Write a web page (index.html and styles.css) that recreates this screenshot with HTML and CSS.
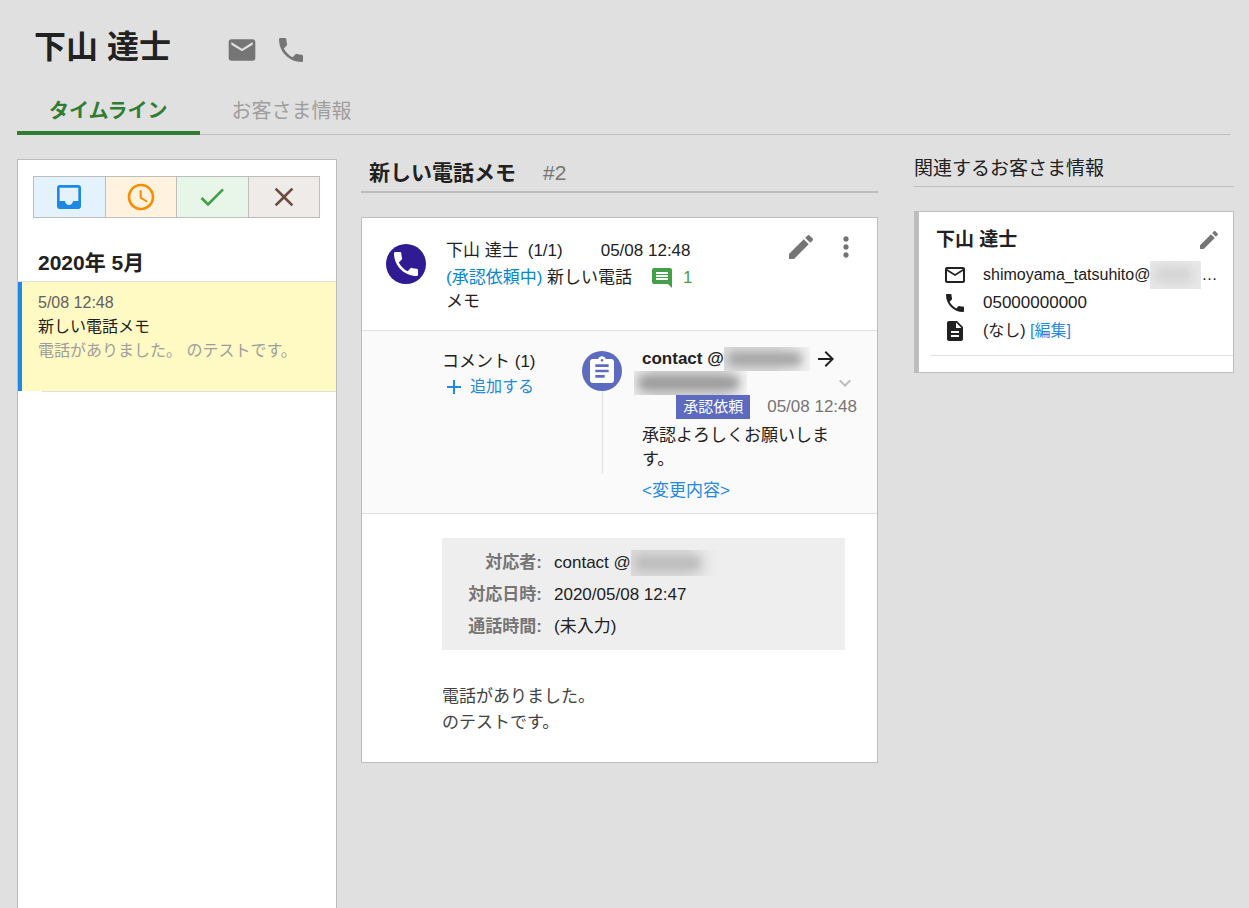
FILE: index.html
```html
<!DOCTYPE html>
<html lang="ja">
<head>
<meta charset="utf-8">
<meta name="viewport" content="width=device-width, initial-scale=1">
<title>下山 達士</title>
<link rel="stylesheet" href="styles.css">
</head>
<body>
<svg class="sprite" aria-hidden="true">
  <symbol id="i-mail" viewBox="0 0 24 24"><path d="M20 4H4c-1.1 0-1.99.9-1.99 2L2 18c0 1.1.9 2 2 2h16c1.1 0 2-.9 2-2V6c0-1.1-.9-2-2-2zm0 4l-8 5-8-5V6l8 5 8-5v2z"/></symbol>
  <symbol id="i-mail-outline" viewBox="0 0 24 24"><path d="M20 4H4c-1.1 0-1.99.9-1.99 2L2 18c0 1.1.9 2 2 2h16c1.1 0 2-.9 2-2V6c0-1.1-.9-2-2-2zm0 14H4V8l8 5 8-5v10zm-8-7L4 6h16l-8 5z"/></symbol>
  <symbol id="i-phone" viewBox="0 0 24 24"><path d="M6.62 10.79c1.44 2.83 3.76 5.14 6.59 6.59l2.2-2.2c.27-.27.67-.36 1.02-.24 1.12.37 2.33.57 3.57.57.55 0 1 .45 1 1V20c0 .55-.45 1-1 1-9.39 0-17-7.61-17-17 0-.55.45-1 1-1h3.5c.55 0 1 .45 1 1 0 1.25.2 2.45.57 3.57.11.35.03.74-.25 1.02l-2.2 2.2z"/></symbol>
  <symbol id="i-inbox" viewBox="0 0 24 24"><path d="M19 3H4.99c-1.11 0-1.98.89-1.98 2L3 19c0 1.1.88 2 1.99 2H19c1.1 0 2-.9 2-2V5c0-1.11-.9-2-2-2zm0 12h-4c0 1.66-1.35 3-3 3s-3-1.34-3-3H4.99V5H19v10z"/></symbol>
  <symbol id="i-clock" viewBox="0 0 24 24"><path d="M11.99 2C6.47 2 2 6.48 2 12s4.47 10 9.99 10C17.52 22 22 17.52 22 12S17.52 2 11.99 2zM12 20c-4.42 0-8-3.58-8-8s3.58-8 8-8 8 3.58 8 8-3.58 8-8 8zm.5-13H11v6l5.25 3.15.75-1.23-4.5-2.67z"/></symbol>
  <symbol id="i-check" viewBox="0 0 24 24"><path d="M9 16.17L4.83 12l-1.42 1.41L9 19 21 7l-1.41-1.41z"/></symbol>
  <symbol id="i-close" viewBox="0 0 24 24"><path d="M19 6.41L17.59 5 12 10.59 6.41 5 5 6.41 10.59 12 5 17.59 6.41 19 12 13.41 17.59 19 19 17.59 13.41 12z"/></symbol>
  <symbol id="i-comment" viewBox="0 0 24 24"><path d="M21.99 4c0-1.1-.89-2-1.99-2H4c-1.1 0-2 .9-2 2v12c0 1.1.9 2 2 2h14l4 4-.01-18zM18 14H6v-2h12v2zm0-3H6V9h12v2zm0-3H6V6h12v2z"/></symbol>
  <symbol id="i-edit" viewBox="0 0 24 24"><path d="M3 17.25V21h3.75L17.81 9.94l-3.75-3.75L3 17.25zM20.71 7.04c.39-.39.39-1.02 0-1.41l-2.34-2.34c-.39-.39-1.02-.39-1.41 0l-1.83 1.83 3.75 3.75 1.83-1.83z"/></symbol>
  <symbol id="i-more" viewBox="0 0 24 24"><path d="M12 8c1.1 0 2-.9 2-2s-.9-2-2-2-2 .9-2 2 .9 2 2 2zm0 2c-1.1 0-2 .9-2 2s.9 2 2 2 2-.9 2-2-.9-2-2-2zm0 6c-1.1 0-2 .9-2 2s.9 2 2 2 2-.9 2-2-.9-2-2-2z"/></symbol>
  <symbol id="i-task" viewBox="0 0 24 24"><path d="M19 3h-4.18C14.4 1.84 13.3 1 12 1c-1.3 0-2.4.84-2.82 2H5c-1.1 0-2 .9-2 2v14c0 1.1.9 2 2 2h14c1.1 0 2-.9 2-2V5c0-1.1-.9-2-2-2zm-7 0c.55 0 1 .45 1 1s-.45 1-1 1-1-.45-1-1 .45-1 1-1zm2 14H7v-2h7v2zm3-4H7v-2h10v2zm0-4H7V7h10v2z"/></symbol>
  <symbol id="i-arrow" viewBox="0 0 24 24"><path d="M12 4l-1.41 1.41L16.17 11H4v2h12.17l-5.58 5.59L12 20l8-8z"/></symbol>
  <symbol id="i-down" viewBox="0 0 24 24"><path d="M16.59 8.59L12 13.17 7.41 8.59 6 10l6 6 6-6z"/></symbol>
  <symbol id="i-add" viewBox="0 0 24 24"><path d="M19 13h-6v6h-2v-6H5v-2h6V5h2v6h6v2z"/></symbol>
  <symbol id="i-doc" viewBox="0 0 24 24"><path d="M14 2H6c-1.1 0-1.99.9-1.99 2L4 20c0 1.1.89 2 1.99 2H18c1.1 0 2-.9 2-2V8l-6-6zm2 16H8v-2h8v2zm0-4H8v-2h8v2zm-3-5V3.5L18.5 9H13z"/></symbol>
</svg>

<header class="header">
  <div class="customer">
    <h1 class="customer-name">下山 達士</h1>
    <div class="customer-actions">
      <button class="icon-button" aria-label="メール"><svg class="icon icon-l"><use href="#i-mail"/></svg></button>
      <button class="icon-button" aria-label="電話"><svg class="icon icon-l"><use href="#i-phone"/></svg></button>
    </div>
  </div>
  <nav class="tabs">
    <button class="tab tab-active">タイムライン</button>
    <button class="tab">お客さま情報</button>
  </nav>
</header>

<main class="columns">
  <section class="timeline">
    <div class="filters">
      <button class="filter filter-inbox" aria-label="受信箱"><svg class="icon icon-l"><use href="#i-inbox"/></svg></button>
      <button class="filter filter-pending" aria-label="保留"><svg class="icon icon-l"><use href="#i-clock"/></svg></button>
      <button class="filter filter-done" aria-label="完了"><svg class="icon icon-l"><use href="#i-check"/></svg></button>
      <button class="filter filter-none" aria-label="対応不要"><svg class="icon icon-l"><use href="#i-close"/></svg></button>
    </div>
    <h2 class="month">2020年 5月</h2>
    <article class="entry">
      <div class="entry-date">5/08 12:48</div>
      <div class="entry-title">新しい電話メモ</div>
      <div class="entry-text">電話がありました。 のテストです。</div>
    </article>
    <hr class="entry-rule">
  </section>

  <section class="memo">
    <header class="memo-heading">
      <h2 class="memo-title">新しい電話メモ</h2>
      <span class="memo-number">#2</span>
    </header>
    <article class="card">
      <div class="card-head">
        <span class="avatar avatar-phone"><svg class="icon icon-l"><use href="#i-phone"/></svg></span>
        <div class="summary">
          <div class="summary-row">
            <span>下山 達士</span><span>(1/1)</span><time class="summary-time">05/08 12:48</time>
          </div>
          <div class="subject-row">
            <div class="subject"><span class="status">(承認依頼中)</span> 新しい電話メモ</div>
            <span class="comment-count"><svg class="icon icon-m"><use href="#i-comment"/></svg>1</span>
          </div>
        </div>
        <div class="card-tools">
          <button class="icon-button" aria-label="編集"><svg class="icon icon-l"><use href="#i-edit"/></svg></button>
          <button class="icon-button" aria-label="メニュー"><svg class="icon icon-l"><use href="#i-more"/></svg></button>
        </div>
      </div>

      <div class="comments">
        <div class="comments-side">
          <div class="comments-label">コメント (1)</div>
          <button class="add-button"><svg class="icon icon-m"><use href="#i-add"/></svg>追加する</button>
        </div>
        <div class="thread">
          <span class="avatar avatar-task"><svg class="icon icon-l"><use href="#i-task"/></svg></span>
          <span class="thread-line"></span>
        </div>
        <div class="comment">
          <div class="comment-from">contact @<span class="mask mask-from"><i></i></span><svg class="icon icon-m"><use href="#i-arrow"/></svg></div>
          <div class="comment-to">
            <span class="mask mask-to"><i></i></span>
            <button class="icon-button toggle" aria-label="開く"><svg class="icon icon-m"><use href="#i-down"/></svg></button>
          </div>
          <div class="comment-meta"><span class="badge">承認依頼</span><time>05/08 12:48</time></div>
          <p class="comment-text">承認よろしくお願いします。</p>
          <a class="link" href="#">&lt;変更内容&gt;</a>
        </div>
      </div>

      <div class="card-body">
        <dl class="details">
          <dt>対応者:</dt><dd class="masked">contact @<span class="mask mask-staff"><i></i></span></dd>
          <dt>対応日時:</dt><dd>2020/05/08 12:47</dd>
          <dt>通話時間:</dt><dd>(未入力)</dd>
        </dl>
        <p class="body-text">電話がありました。<br>のテストです。</p>
      </div>
    </article>
  </section>

  <aside class="related">
    <h2 class="related-title">関連するお客さま情報</h2>
    <article class="profile">
      <div class="profile-head">
        <h3 class="profile-name">下山 達士</h3>
        <button class="icon-button" aria-label="編集"><svg class="icon icon-m"><use href="#i-edit"/></svg></button>
      </div>
      <ul class="contacts">
        <li><svg class="icon icon-m"><use href="#i-mail-outline"/></svg><span class="masked">shimoyama_tatsuhito@<span class="mask mask-mail"><i></i></span>…</span></li>
        <li class="number"><svg class="icon icon-m"><use href="#i-phone"/></svg><span>05000000000</span></li>
        <li><svg class="icon icon-m"><use href="#i-doc"/></svg><span>(なし) <a class="link" href="#">[編集]</a></span></li>
      </ul>
    </article>
  </aside>
</main>
</body>
</html>
```

FILE: styles.css
```css
* { box-sizing: border-box; }

body {
  margin: 0;
  min-height: 100vh;
  display: flex;
  flex-direction: column;
  padding: 0 15px 0 17px;
  background: #e0e0e0;
  color: #212121;
  font: 17px/24px "Liberation Sans", "Noto Sans CJK JP", sans-serif;
}

h1, h2, h3, p, dl, dd, ul { margin: 0; padding: 0; }
button {
  margin: 0;
  padding: 0;
  border: 0;
  background: none;
  color: inherit;
  font: inherit;
  cursor: pointer;
}
a { text-decoration: none; }

.sprite { display: none; }
.icon { display: block; flex: none; fill: currentColor; }
.icon-l { width: 32px; height: 32px; }
.icon-m { width: 24px; height: 24px; }
.icon-button { color: #757575; }
.link { color: #1e88e5; }

/* Header */
.customer {
  display: flex;
  align-items: center;
  gap: 55px;
  padding: 24px 17px 0;
}
.customer-name { font-size: 32px; line-height: 46px; }
.customer-actions { display: flex; gap: 17px; padding-top: 6px; }
.tabs {
  display: flex;
  margin: 16px 4px 0 0;
  height: 49px;
  box-shadow: inset 0 -1px #bdbdbd;
}
.tab {
  padding: 5px 32px 0;
  color: #9e9e9e;
  font-size: 20px;
  border-bottom: 4px solid transparent;
}
.tab-active { color: #2e7d32; font-weight: bold; border-color: #2e7d32; }

/* Columns */
.columns {
  flex: 1;
  display: grid;
  grid-template-columns: 320px minmax(0, 1fr) 320px;
  padding-top: 24px;
}

/* Timeline */
.timeline {
  background: #fff;
  border: 1px solid #bdbdbd;
  border-bottom: 0;
}
.filters {
  display: grid;
  grid-template-columns: repeat(4, 1fr);
  gap: 1px;
  margin: 16px 16px 0 15px;
  border: 1px solid #bdbdbd;
  background: #bdbdbd;
}
.filter { display: flex; justify-content: center; padding: 4px 0; }
.filter-inbox { background: #e3f2fd; color: #1e88e5; }
.filter-pending { background: #fff3e0; color: #fb8c00; }
.filter-done { background: #e8f5e9; color: #43a047; }
.filter-none { background: #efebe9; color: #6d4c41; }
.month {
  padding: 29px 20px 3px;
  font-size: 21px;
  line-height: 31px;
  border-bottom: 1px solid #e0e0e0;
}
.entry {
  min-height: 109px;
  padding: 9px 16px;
  border-left: 4px solid #1e88e5;
  background: #fff9c4;
  font-size: 16px;
}
.entry-date { color: #616161; }
.entry-text { color: #9e9e9e; }
.entry-rule { margin: 0 0 0 24px; border: 0; border-top: 1px solid #e0e0e0; }

/* Memo */
.memo { padding: 0 36px 0 24px; }
.memo-heading {
  display: flex;
  gap: 27px;
  padding: 0 8px 4px;
  border-bottom: 2px solid #bdbdbd;
  font-size: 21px;
  line-height: 28px;
}
.memo-title { font-size: inherit; }
.memo-number { color: #757575; }
.card {
  margin-top: 24px;
  border: 1px solid #bdbdbd;
  background: #fff;
}
.card-head {
  display: flex;
  gap: 20px;
  min-height: 113px;
  padding: 21px 15px 15px 24px;
  border-bottom: 1px solid #e0e0e0;
}
.avatar {
  display: flex;
  flex: none;
  align-items: center;
  justify-content: center;
  width: 40px;
  height: 40px;
  border-radius: 50%;
  color: #fff;
}
.avatar-phone { margin-top: 5px; background: #311b92; }
.avatar-task { background: #5c6bc0; }
.summary { flex: 1; }
.summary-row { display: flex; gap: 9px; padding-bottom: 3px; }
.summary-time { padding-left: 29px; }
.subject-row { display: flex; gap: 14px; }
.subject { width: 190px; }
.status { color: #0288d1; }
.comment-count { display: flex; gap: 9px; color: #43a047; }
.card-tools { display: flex; align-items: flex-start; gap: 13px; margin-top: -8px; }

/* Comments */
.comments {
  display: flex;
  padding: 16px 20px 10px 80px;
  background: #fafafa;
  border-bottom: 1px solid #e0e0e0;
}
.comments-side { width: 140px; padding-top: 3px; }
.add-button {
  display: flex;
  gap: 4px;
  padding-top: 1px;
  color: #1e88e5;
  font-size: 16px;
}
.thread { display: flex; flex-direction: column; align-items: center; padding-top: 4px; }
.thread-line { width: 1px; height: 82px; background: #e0e0e0; }
.comment { flex: 1; padding-left: 20px; }
.comment-from { display: flex; font-weight: bold; }
.comment-to { display: flex; justify-content: space-between; }
.toggle { color: #bdbdbd; }
.comment-meta {
  display: flex;
  justify-content: flex-end;
  gap: 17px;
  color: #757575;
}
.badge {
  padding: 0 7px;
  background: #5c6bc0;
  color: #fff;
  font-size: 15px;
}
.comment-text { padding: 5px 16px 7px 0; }

/* Obscured names and addresses */
.mask {
  position: relative;
  display: block;
  flex: none;
  height: 24px;
  overflow: hidden;
  background: linear-gradient(90deg, #dcdcdc 60%, #f2f2f2);
}
.mask i {
  position: absolute;
  inset: 5px 8px 5px 4px;
  border-radius: 6px;
  background: #a4a4a4;
  filter: blur(5px);
}
.mask-from { width: 86px; margin-right: 4px; }
.mask-to {
  width: 113px;
  margin-left: -8px;
  background: linear-gradient(90deg, #e8e8e8, #d4d4d4 20% 75%, #f2f2f2);
}
.mask-to i { background: #999; }
.mask-staff {
  width: 88px;
  height: 26px;
  background: linear-gradient(90deg, #dadada 60%, #eee);
}
.mask-staff i { right: 18px; background: #bdbdbd; }
.mask-mail { width: 51px; height: 28px; background: #e8e8e8; }
.mask-mail i { background: #d6d6d6; }
.masked { display: flex; align-items: center; }

/* Memo body */
.card-body { padding: 24px 32px 26px 80px; }
.details {
  display: grid;
  grid-template-columns: 100px 1fr;
  grid-auto-rows: 32px;
  column-gap: 12px;
  padding: 9px 0 7px;
  background: #eee;
  line-height: 32px;
}
.details dt { color: #757575; font-weight: bold; text-align: right; }
.body-text { padding-top: 34px; color: #424242; line-height: 26px; }

/* Related customer */
.related-title {
  margin-top: -2px;
  padding-bottom: 5px;
  border-bottom: 1px solid #bdbdbd;
  font-size: 19px;
  font-weight: normal;
}
.profile {
  margin-top: 24px;
  padding: 16px 0 16px 12px;
  border: 1px solid #bdbdbd;
  border-left-width: 5px;
  background: #fff;
}
.profile-head {
  display: flex;
  justify-content: space-between;
  padding: 0 12px 9px 5px;
}
.profile-name { font-size: 19px; }
.contacts {
  list-style: none;
  padding: 0 0 10px 12px;
  border-bottom: 1px solid #e0e0e0;
  font-size: 16px;
}
.contacts li { display: flex; align-items: center; gap: 16px; height: 28px; }
.number { font-size: 17px; }
```
